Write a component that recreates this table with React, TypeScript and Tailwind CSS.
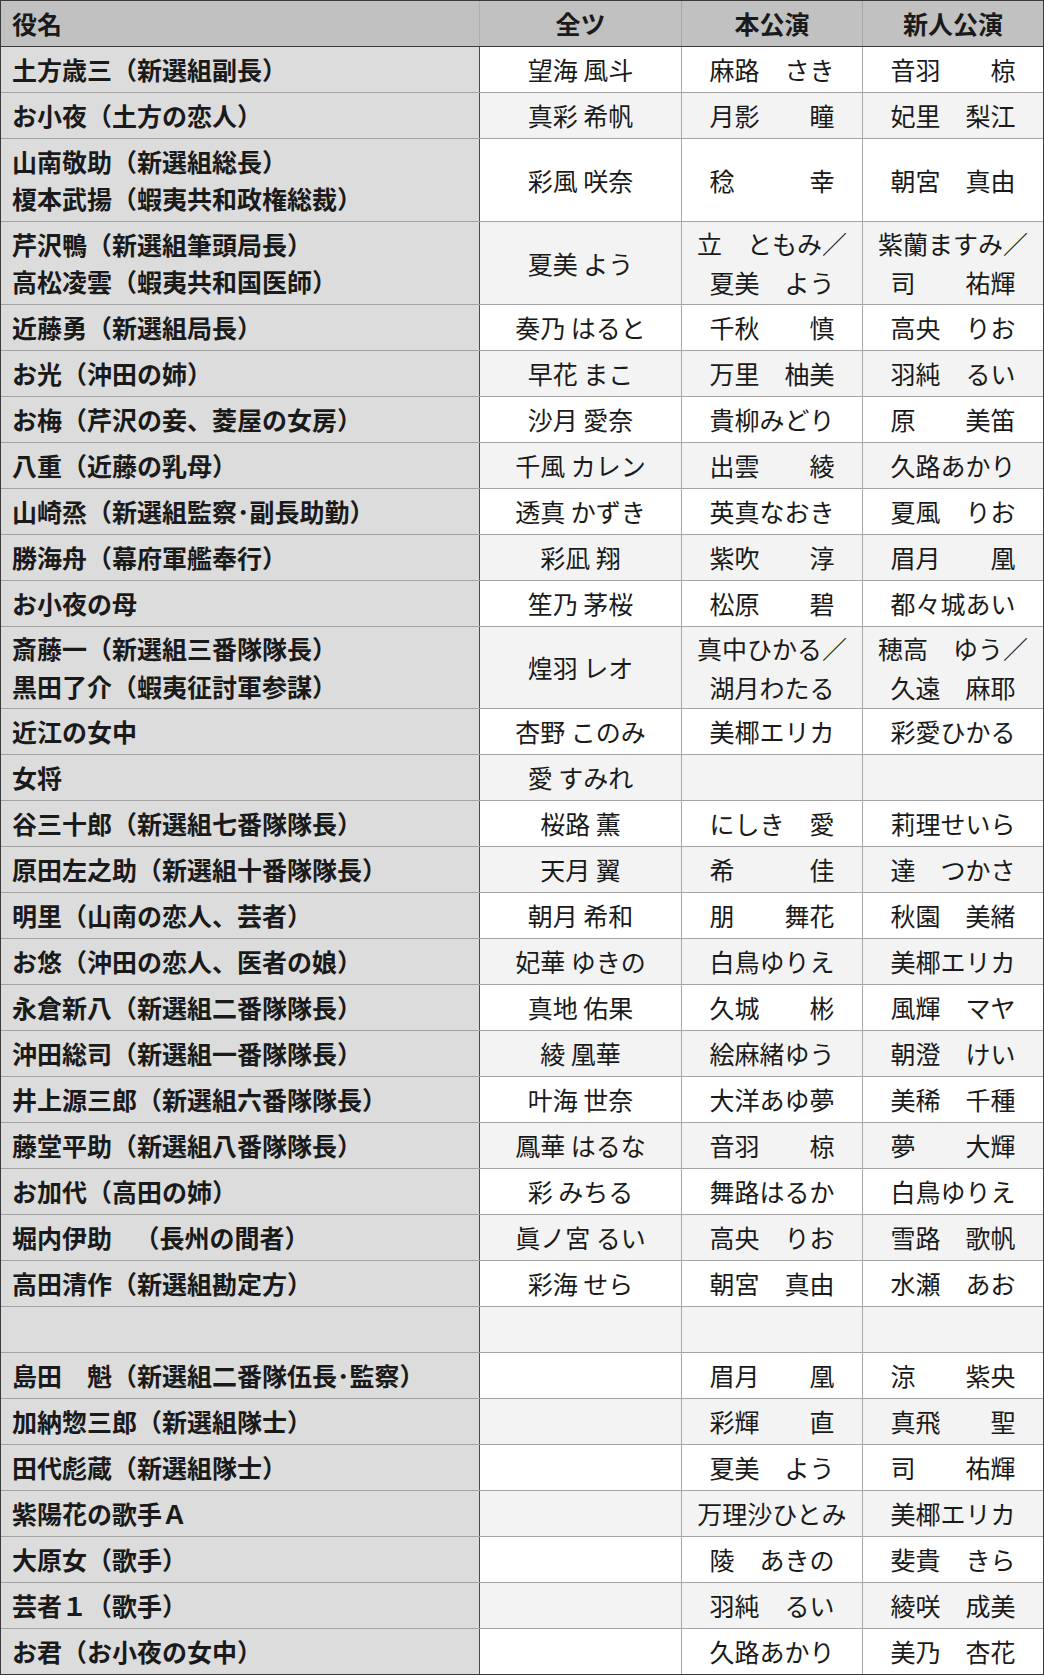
import React from "react";

type Row = { role: React.ReactNode[]; a: string; b: string[]; c: string[]; h?: string };

const rows: Row[] = [
  { role: ["土方歳三（新選組副長）"], a: "望海 風斗", b: ["麻路　さき"], c: ["音羽　　椋"] },
  { role: ["お小夜（土方の恋人）"], a: "真彩 希帆", b: ["月影　　瞳"], c: ["妃里　梨江"] },
  { role: ["山南敬助（新選組総長）", "榎本武揚（蝦夷共和政権総裁）"], a: "彩風 咲奈", b: ["稔　　　幸"], c: ["朝宮　真由"], h: "h-[83px]" },
  { role: ["芹沢鴨（新選組筆頭局長）", "高松凌雲（蝦夷共和国医師）"], a: "夏美 よう", b: ["立　ともみ／", "夏美　よう"], c: ["紫蘭ますみ／", "司　　祐輝"], h: "h-[83px]" },
  { role: ["近藤勇（新選組局長）"], a: "奏乃 はると", b: ["千秋　　慎"], c: ["高央　りお"] },
  { role: ["お光（沖田の姉）"], a: "早花 まこ", b: ["万里　柚美"], c: ["羽純　るい"] },
  { role: ["お梅（芹沢の妾、菱屋の女房）"], a: "沙月 愛奈", b: ["貴柳みどり"], c: ["原　　美笛"] },
  { role: ["八重（近藤の乳母）"], a: "千風 カレン", b: ["出雲　　綾"], c: ["久路あかり"] },
  { role: ["山崎烝（新選組監察･副長助勤）"], a: "透真 かずき", b: ["英真なおき"], c: ["夏風　りお"] },
  { role: ["勝海舟（幕府軍艦奉行）"], a: "彩凪 翔", b: ["紫吹　　淳"], c: ["眉月　　凰"] },
  { role: ["お小夜の母"], a: "笙乃 茅桜", b: ["松原　　碧"], c: ["都々城あい"] },
  { role: ["斎藤一（新選組三番隊隊長）", "黒田了介（蝦夷征討軍参謀）"], a: "煌羽 レオ", b: ["真中ひかる／", "湖月わたる"], c: ["穂高　ゆう／", "久遠　麻耶"], h: "h-[82px]" },
  { role: ["近江の女中"], a: "杏野 このみ", b: ["美椰エリカ"], c: ["彩愛ひかる"] },
  { role: ["女将"], a: "愛 すみれ", b: [""], c: [""] },
  { role: ["谷三十郎（新選組七番隊隊長）"], a: "桜路 薫", b: ["にしき　愛"], c: ["莉理せいら"] },
  { role: ["原田左之助（新選組十番隊隊長）"], a: "天月 翼", b: ["希　　　佳"], c: ["達　つかさ"] },
  { role: ["明里（山南の恋人、芸者）"], a: "朝月 希和", b: ["朋　　舞花"], c: ["秋園　美緒"] },
  { role: ["お悠（沖田の恋人、医者の娘）"], a: "妃華 ゆきの", b: ["白鳥ゆりえ"], c: ["美椰エリカ"] },
  { role: ["永倉新八（新選組二番隊隊長）"], a: "真地 佑果", b: ["久城　　彬"], c: ["風輝　マヤ"] },
  { role: ["沖田総司（新選組一番隊隊長）"], a: "綾 凰華", b: ["絵麻緒ゆう"], c: ["朝澄　けい"] },
  { role: ["井上源三郎（新選組六番隊隊長）"], a: "叶海 世奈", b: ["大洋あゆ夢"], c: ["美稀　千種"] },
  { role: ["藤堂平助（新選組八番隊隊長）"], a: "鳳華 はるな", b: ["音羽　　椋"], c: ["夢　　大輝"] },
  { role: ["お加代（高田の姉）"], a: "彩 みちる", b: ["舞路はるか"], c: ["白鳥ゆりえ"] },
  {
    role: [
      <>
        堀内伊助　<span className="ml-[10px]">（長州の間者）</span>
      </>,
    ],
    a: "眞ノ宮 るい",
    b: ["高央　りお"],
    c: ["雪路　歌帆"],
  },
  { role: ["高田清作（新選組勘定方）"], a: "彩海 せら", b: ["朝宮　真由"], c: ["水瀬　あお"] },
  { role: [""], a: "", b: [""], c: [""] },
  { role: ["島田　魁（新選組二番隊伍長･監察）"], a: "", b: ["眉月　　凰"], c: ["涼　　紫央"] },
  { role: ["加納惣三郎（新選組隊士）"], a: "", b: ["彩輝　　直"], c: ["真飛　　聖"] },
  { role: ["田代彪蔵（新選組隊士）"], a: "", b: ["夏美　よう"], c: ["司　　祐輝"] },
  { role: ["紫陽花の歌手Ａ"], a: "", b: ["万理沙ひとみ"], c: ["美椰エリカ"] },
  { role: ["大原女（歌手）"], a: "", b: ["陵　あきの"], c: ["斐貴　きら"] },
  { role: ["芸者１（歌手）"], a: "", b: ["羽純　るい"], c: ["綾咲　成美"] },
  { role: ["お君（お小夜の女中）"], a: "", b: ["久路あかり"], c: ["美乃　杏花"] },
];

function RoleLines({ lines }: { lines: React.ReactNode[] }) {
  return (
    <div className="flex flex-col leading-[37.5px] whitespace-pre">
      {lines.map((l, i) => (
        <span key={i}>{l}</span>
      ))}
    </div>
  );
}

function DataLines({ lines }: { lines: string[] }) {
  return (
    <div className="flex flex-col leading-[39px] whitespace-pre">
      {lines.map((l, i) => (
        <span key={i}>{l}</span>
      ))}
    </div>
  );
}

export default function App() {
  return (
    <div
      className="w-[1044px] h-[1675px] bg-white text-[#1a1a1a] text-[25px]"
      style={{ fontFamily: '"Noto Sans CJK JP", "Noto Sans", sans-serif' }}
    >
      <div className="border-t border-l border-r border-[#3a3a3a]">
        <div className="grid grid-cols-[479px_202px_181px_180px] h-[46px] bg-[#c1c1c1] border-b border-[#3a3a3a] font-bold leading-[37px]">
          <div className="flex items-center pl-[11px] border-r border-[#b0b0b0]">役名</div>
          <div className="flex items-center justify-center border-r border-[#a8a8a8]">全ツ</div>
          <div className="flex items-center justify-center border-r border-[#a8a8a8]">本公演</div>
          <div className="flex items-center justify-center">新人公演</div>
        </div>
        {rows.map((r, i) => {
          const last = i === rows.length - 1;
          const even = i % 2 === 1;
          return (
            <div
              key={i}
              className={`grid grid-cols-[479px_202px_181px_180px] ${r.h ?? "h-[46px]"} border-b ${
                last ? "border-[#3a3a3a]" : "border-[#a3a3a3]"
              } ${even ? "bg-[#f3f3f3]" : "bg-white"}`}
            >
              <div className="flex items-center pl-[11px] bg-[#dcdcdc] border-r border-[#4a4a4a] font-bold">
                <RoleLines lines={r.role} />
              </div>
              <div className="flex items-center justify-center border-r border-[#a8a8a8] whitespace-pre leading-[39px]">
                {r.a}
              </div>
              <div className="flex items-center justify-center border-r border-[#a8a8a8] text-center">
                <DataLines lines={r.b} />
              </div>
              <div className="flex items-center justify-center text-center">
                <DataLines lines={r.c} />
              </div>
            </div>
          );
        })}
      </div>
    </div>
  );
}
